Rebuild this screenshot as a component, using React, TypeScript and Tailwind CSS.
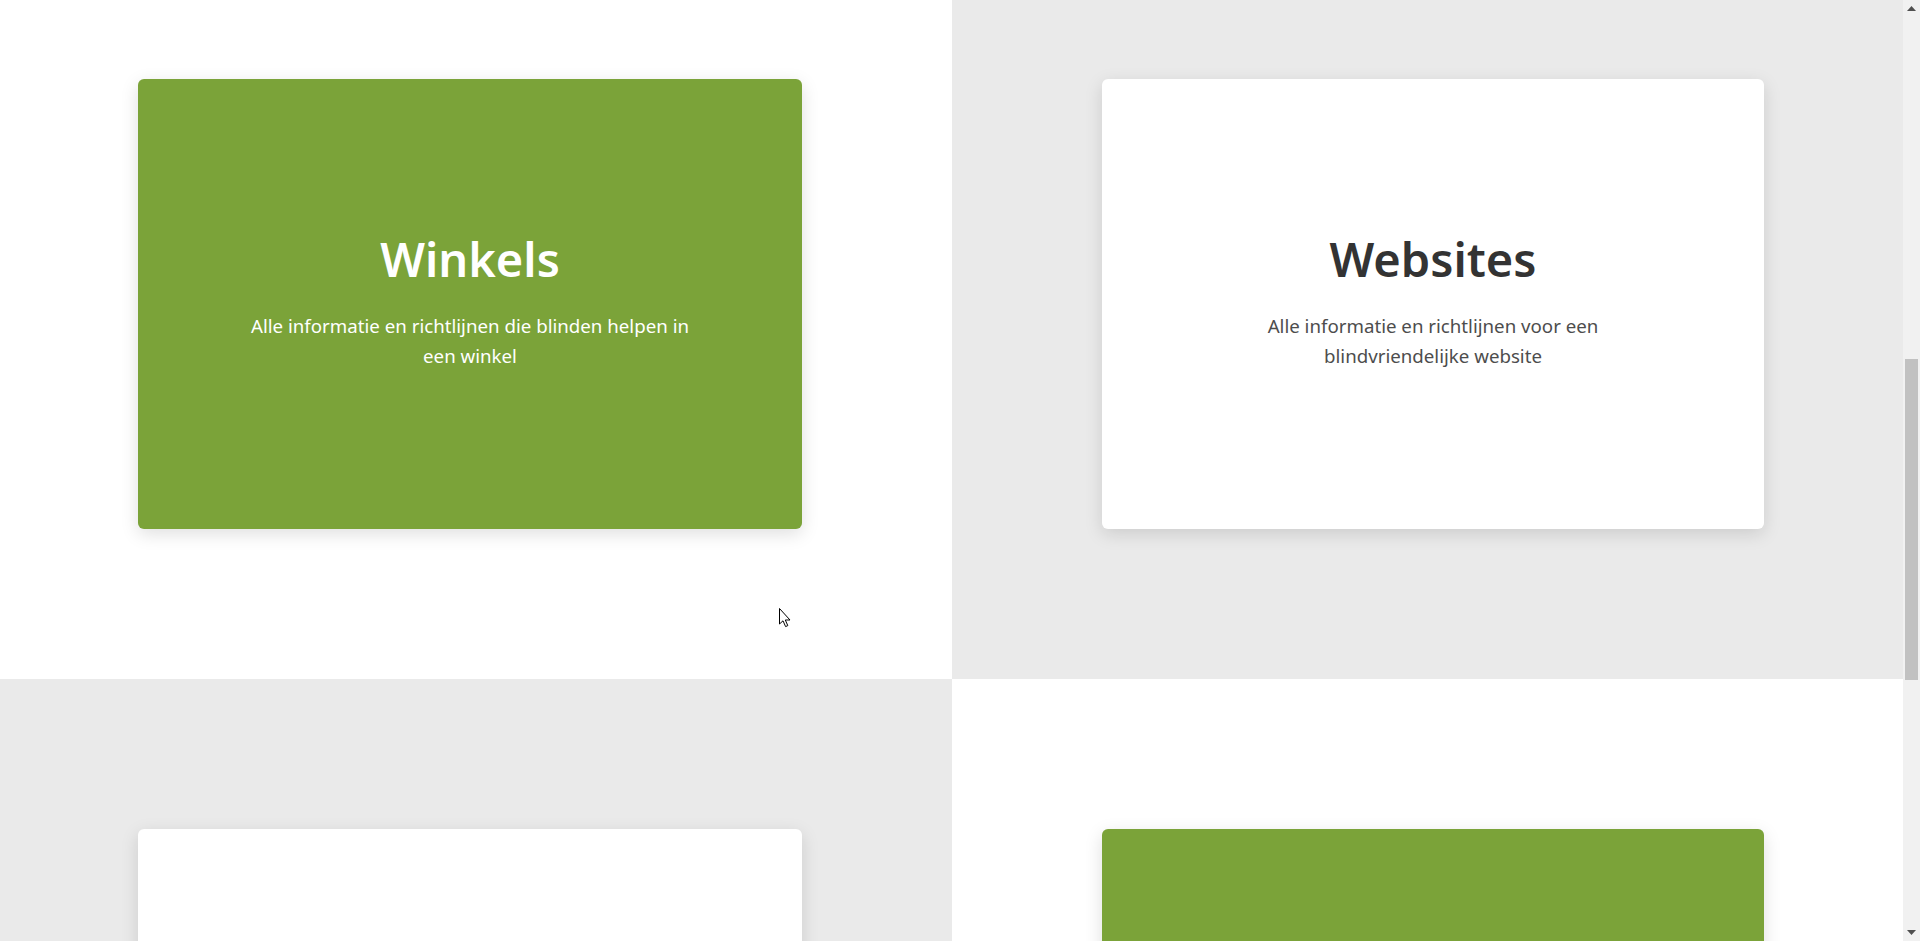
import React from "react";

type CardProps = { title: string; text: string; green?: boolean };

function Card({ title, text, green }: CardProps) {
  return (
    <div
      className={
        "h-[450px] w-full rounded-[6px] flex flex-col items-center justify-center text-center shadow-[0_5px_18px_rgba(0,0,0,0.13)] " +
        (green ? "bg-[#7ba339] text-white" : "bg-white text-[#333333]")
      }
    >
      {title ? (
        <div className="-mt-[8px] flex flex-col items-center">
          <h2 className="text-[47px] leading-[60px] font-semibold tracking-[0px]">{title}</h2>
          <p
            className={
              "mt-[22px] max-w-[460px] text-[18.7px] leading-[30px] " +
              (green ? "text-white" : "text-[#4d4d4d]")
            }
          >
            {text}
          </p>
        </div>
      ) : null}
    </div>
  );
}

function Cursor() {
  return (
    <svg
      className="absolute left-[779px] top-[608px]"
      width="13"
      height="20"
      viewBox="0 0 13 20"
    >
      <path
        d="M0.5 0.5 L0.5 16 L4 12.8 L6.6 18.6 L8.8 17.6 L6.3 12 L11 12 Z"
        fill="#ffffff"
        stroke="#000000"
        strokeWidth="1"
        strokeLinejoin="miter"
      />
    </svg>
  );
}

function Scrollbar() {
  return (
    <div className="w-[17px] h-full bg-[#f1f1f1] flex flex-col items-center relative">
      <div className="h-[17px] w-full flex items-center justify-center">
        <svg width="9" height="5" viewBox="0 0 9 5">
          <path d="M4.5 0 L9 5 L0 5 Z" fill="#505050" />
        </svg>
      </div>
      <div className="mt-[342px] h-[321px] w-[13px] bg-[#c1c1c1]" />
      <div className="mt-auto h-[17px] w-full flex items-center justify-center">
        <svg width="9" height="5" viewBox="0 0 9 5">
          <path d="M0 0 L9 0 L4.5 5 Z" fill="#505050" />
        </svg>
      </div>
    </div>
  );
}

export default function App() {
  return (
    <div
      className="h-[941px] w-[1920px] overflow-hidden flex relative"
      style={{ fontFamily: '"Noto Sans", "Open Sans", sans-serif' }}
    >
      <div className="flex-1 flex flex-col">
        <div className="grid grid-cols-[952px_1fr] h-[679px] shrink-0">
          <div className="bg-white pt-[79px] pl-[138px] pr-[150px]">
            <Card
              green
              title="Winkels"
              text="Alle informatie en richtlijnen die blinden helpen in een winkel"
            />
          </div>
          <div className="bg-[#eaeaea] pt-[79px] pl-[150px] pr-[139px]">
            <Card
              title="Websites"
              text="Alle informatie en richtlijnen voor een blindvriendelijke website"
            />
          </div>
        </div>
        <div className="grid grid-cols-[952px_1fr] flex-1">
          <div className="bg-[#eaeaea] pt-[150px] pl-[138px] pr-[150px]">
            <Card title="" text="" />
          </div>
          <div className="bg-white pt-[150px] pl-[150px] pr-[139px]">
            <Card green title="" text="" />
          </div>
        </div>
      </div>
      <Scrollbar />
      <Cursor />
    </div>
  );
}
